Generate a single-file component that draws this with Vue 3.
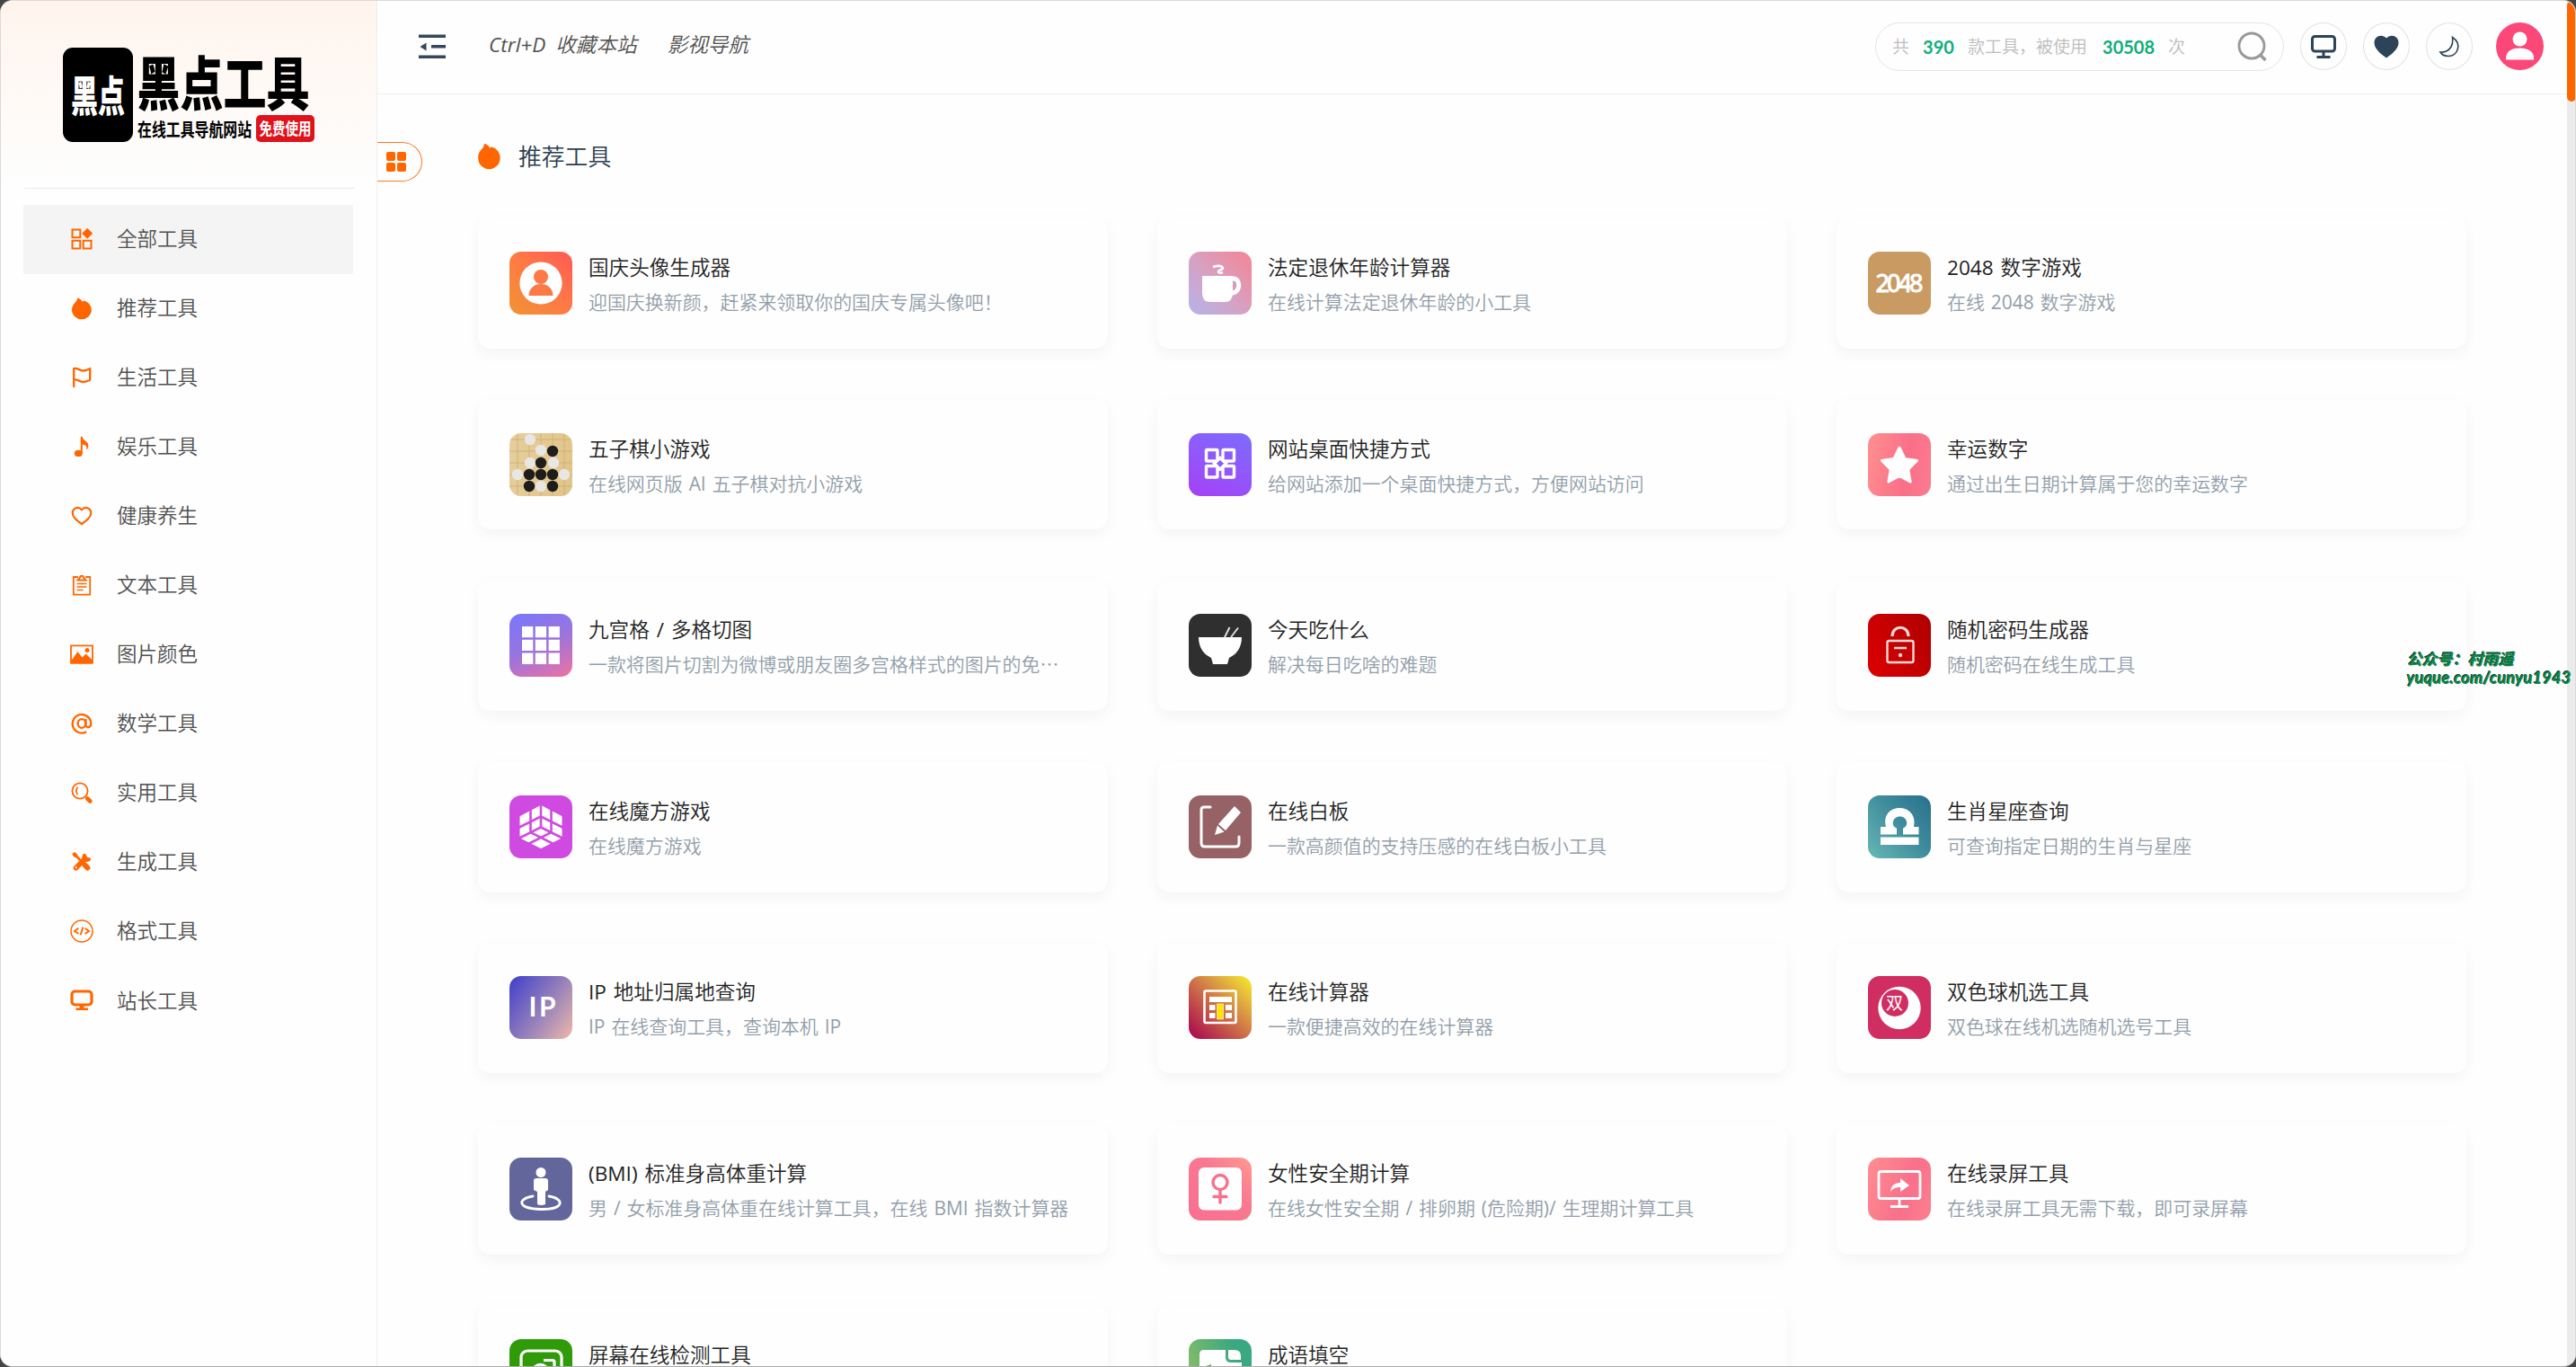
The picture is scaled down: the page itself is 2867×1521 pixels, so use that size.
<script setup>
const flame = '<path fill="currentColor" d="M7.200.6c2.500.6 4.300 2 5.300 3.900.6.1 1.200-.2 1.500-.9 4.700 1.100 8.800 5 8.800 10.200a10.900 10.400 0 0 1-21.800 0C1 9.600 3 7.400 4.700 5.600 6 4.200 6.800 2.800 7.200.6z"/>'

const menu = [
  { name: '全部工具', icon: '<g fill="none" stroke="currentColor" stroke-width="2"><path d="M1.500 1.500h8.800v8.800H1.500zM1.500 13.700h8.800v8.800H1.500zM13.700 13.700h8.800v8.800h-8.800z"/></g><path fill="currentColor" d="M18.200-.3l6 6-6 6-6-6z"/>' },
  { name: '推荐工具', icon: flame },
  { name: '生活工具', icon: '<path fill="none" stroke="currentColor" stroke-width="2.300" d="M3.200 23V2.200c4-1.400 6.300 2.300 10.300 2.300 3 0 4.500-1 7.700-2.300v12.600c-3 1.200-4.700 2.200-7.700 2.200-4 0-6.300-3.700-10.300-2.300"/>' },
  { name: '娱乐工具', icon: '<ellipse cx="8.300" cy="19.400" rx="4.500" ry="3.700" fill="currentColor"/><path fill="currentColor" d="M10.800.8h1.800c.5 4.600 7.400 5.600 6.800 10.600-.2 1.700-1.200 3.300-2.400 4.200 1.400-3.700-.7-5.600-4.200-6v10h-2z"/>' },
  { name: '健康养生', icon: '<path fill="none" stroke="currentColor" stroke-width="2.200" stroke-linejoin="round" d="M12 21C6 16.600 1.800 13.500 1.800 8.900 1.800 3 8.600 1 12 5.400 15.400 1 22.200 3 22.200 8.900 22.200 13.500 18 16.600 12 21z"/>' },
  { name: '文本工具', icon: '<g fill="none" stroke="currentColor" stroke-width="1.800"><path d="M8 3H2.800v19.600h18.400V3H16"/><path d="M7.500 6.500h9L14 3.600C13.800 1 10.200 1 10 3.600z" stroke-width="2"/><path stroke-width="1.400" d="M6.500 10.500h11M6.500 14h11M6.500 17.500h7"/></g>' },
  { name: '图片颜色', icon: '<path fill="none" stroke="currentColor" stroke-width="1.800" d="M0 2.300h24v19.400H0z"/><path fill="currentColor" d="M0 19.500L7.500 9l5 6.500 4-4L24 18.500v4H0z"/><circle cx="18" cy="7.500" r="2.500" fill="currentColor"/>' },
  { name: '数学工具', icon: '<g fill="none" stroke="currentColor" stroke-width="2.300"><path d="M17.200 21.200A10.300 10.300 0 1 1 22.300 12c0 5-5.800 5.400-5.800 1.500V7"/><ellipse cx="12" cy="12" rx="4.400" ry="4.800"/></g>' },
  { name: '实用工具', icon: '<g fill="none" stroke="currentColor"><circle cx="10" cy="10" r="8.600" stroke-width="1.800"/><path stroke-width="1.800" d="M7.500 5.800c-2.200 2-2.200 6 0 8.200"/><path stroke-width="4.600" stroke-linecap="round" d="M18.200 18.500l3.200 3"/></g>' },
  { name: '生成工具', icon: '<g stroke="currentColor" fill="none" stroke-linecap="round"><path stroke-width="2.600" d="M4.500 4L14 14"/><path stroke-width="4.400" d="M3.800 3.500l1.400 1.500"/><path stroke-width="6" d="M15.500 15.500l2.800 3"/><path stroke-width="5.600" d="M5.500 18.700L16 8"/><path stroke-width="4" d="M15 4.800c-2 3.500 1 6.500 5 4.400"/></g><circle cx="5.700" cy="18.300" r="1" fill="#fff"/>' },
  { name: '格式工具', icon: '<g fill="none" stroke="currentColor"><circle cx="12" cy="12" r="12" stroke-width="1.500"/><path stroke-width="1.900" d="M8.400 8.700L4 12l4.400 3M15.600 8.700L20 12l-4.400 3M13.400 7.600l-2.800 8.700"/></g>' },
  { name: '站长工具', icon: '<rect x="1" y="2" width="22" height="15" rx="3.500" fill="none" stroke="currentColor" stroke-width="3.200"/><path fill="currentColor" d="M9.500 18h5v2.500H19V23H5.500v-2.500h4z"/>' }
]

const stones = (list, fill) => list.map(([x, y]) => `<circle cx="${x}" cy="${y}" r="6.200" fill="${fill}"/>`).join('')

const tools = [
  { name: '国庆头像生成器', desc: '迎国庆换新颜，赶紧来领取你的国庆专属头像吧！', bg: 'linear-gradient(45deg,#f09433,#ff7a45 50%,#ff5a55)',
    icon: '<circle cx="35" cy="35" r="23.600" fill="#fff"/><g fill="#fb7a45"><circle cx="35" cy="28" r="8"/><path d="M21.500 49c0-7 5-13 13.500-13s13.500 6 13.500 13z"/></g>' },
  { name: '法定退休年龄计算器', desc: '在线计算法定退休年龄的小工具', bg: 'linear-gradient(45deg,#b4b4ec,#d8a0c0 50%,#f58494)',
    icon: '<path fill="#fff" d="M15 28q0-1 1-1h32q1 0 1 1v18q0 10-9 10H24q-9 0-9-10z"/><path fill="none" stroke="#fff" stroke-width="5" d="M47 30h3c8 0 8 16-2 16"/><path fill="none" stroke="#fff" stroke-width="2.500" d="M27 17c6-2 10-1 11 1s-5 2-5 4 2 2 5 1"/>' },
  { name: '2048 数字游戏', desc: '在线 2048 数字游戏', bg: '#c99a62',
    icon: '<text x="35" y="45" text-anchor="middle" fill="#fff" stroke="#fff" stroke-width="1" font-family="Noto Sans" font-size="27" textLength="53">2048</text>' },
  { name: '五子棋小游戏', desc: '在线网页版 AI 五子棋对抗小游戏', bg: 'linear-gradient(100deg,#e6ce9c,#e2c488)',
    icon: '<path stroke="#c9ac74" stroke-width=".8" d="M0 7h70M0 20h70M0 33h70M0 46h70M0 59h70M9 0v70M22 0v70M35 0v70M48 0v70M61 0v70"/>'
      + stones([[23, 7], [35, 19], [23, 33], [49, 33], [9, 46], [61, 46], [35, 59]], '#e9e7e4')
      + stones([[48, 20], [35, 33], [22, 46], [35, 46], [48, 46], [22, 59], [48, 59]], '#1d1d1b') },
  { name: '网站桌面快捷方式', desc: '给网站添加一个桌面快捷方式，方便网站访问', bg: 'linear-gradient(25deg,#a640f5,#9355fa 45%,#7c6cff)',
    icon: '<g fill="none" stroke="#fff" stroke-width="3.400"><rect x="19.500" y="18.500" width="12.500" height="12.500" rx="1"/><rect x="38" y="18.500" width="12.500" height="12.500" rx="1"/><rect x="19.500" y="36.500" width="12.500" height="12.500" rx="1"/><rect x="38" y="36.500" width="12.500" height="12.500" rx="1"/><path d="M35 27.500l6.500 6.300-6.500 6.300-6.500-6.300z" fill="#8b5cfb"/></g>' },
  { name: '幸运数字', desc: '通过出生日期计算属于您的幸运数字', bg: 'linear-gradient(100deg,#ff9090,#fa6f88 60%,#fb7c90)',
    icon: '<path fill="#fff" stroke="#fff" stroke-width="3" stroke-linejoin="round" d="M35 16l6 12.500 13.500 2-9.700 9.700 2.300 13.800L35 47.500 22.900 54l2.300-13.800-9.700-9.700 13.500-2z"/>' },
  { name: '九宫格 / 多格切图', desc: '一款将图片切割为微博或朋友圈多宫格样式的图片的免⋯', bg: 'linear-gradient(155deg,#7876ff,#9a74dc 50%,#f072a2)',
    icon: '<path fill="#fff" d="M14 14h12.300v12.300H14zM28.800 14h12.300v12.300H28.800zM43.600 14h12.300v12.300H43.600zM14 28.800h12.300v12.300H14zM28.800 28.800h12.300v12.300H28.800zM43.600 28.800h12.300v12.300H43.600zM14 43.600h12.300v12.300H14zM28.800 43.600h12.300v12.300H28.800zM43.600 43.600h12.300v12.300H43.600z"/>' },
  { name: '今天吃什么', desc: '解决每日吃啥的难题', bg: '#2f2f2f',
    icon: '<path fill="#fff" d="M11 26h48c0 12-6 19-14 23l-2 7H27l-2-7c-8-4-14-11-14-23z"/><path stroke="#ddd" stroke-width="2" d="M40 26l5.500-11M47 26l8-10.500"/>' },
  { name: '随机密码生成器', desc: '随机密码在线生成工具', bg: 'linear-gradient(60deg,#de0000,#ae0000)',
    icon: '<g fill="none" stroke="#f6dada" stroke-width="2.400"><rect x="21.500" y="30" width="29" height="24" rx="2"/><path d="M27 25c0-13 18-13 18 0" stroke-width="3.200"/><path d="M29 38h14"/></g><circle cx="36" cy="46" r="2.200" fill="#f6dada"/>' },
  { name: '在线魔方游戏', desc: '在线魔方游戏', bg: '#cf4ae0',
    icon: '<path fill="#fff" stroke="#fff" stroke-linejoin="round" stroke-width="3" d="M35 12.500l22 11.500v22.500L35 57.500 13 46.500V24z"/><g fill="none" stroke="#cf4ae0" stroke-width="2.600"><path d="M35 9v26.500L10 48M35 35.500L60 48"/><path d="M23.500 15v26.200M46.500 15v26.200M10 36l25-12.500L60 36M46.500 41.200L21 54M23.500 41.200L49 54"/></g>' },
  { name: '在线白板', desc: '一款高颜值的支持压感的在线白板小工具', bg: '#976265',
    icon: '<path fill="none" stroke="#fff" stroke-width="3" stroke-linecap="round" d="M24 13h-7q-3 0-3 3v37q0 4 4 4h34q4 0 4-4v-7"/><path fill="#fff" d="M51 12l7 7-17 20-8-7zM32 33.500l7.500 7L29 44z"/>' },
  { name: '生肖星座查询', desc: '可查询指定日期的生肖与星座', bg: 'linear-gradient(50deg,#66b8b6,#3f8c9c 55%,#28708c)',
    icon: '<path fill="#fff" d="M14 46.500h42.500V55H14zM14 35h6c-7-28 37-28 31 0h5.500v8.500H39v-7c7-2 5-13-3.500-13S25 34.500 32 36.500v7H14z"/>' },
  { name: 'IP 地址归属地查询', desc: 'IP 在线查询工具，查询本机 IP', bg: 'linear-gradient(125deg,#4744ca 5%,#a088b8 60%,#f0b8a8)',
    icon: '<text x="36.500" y="45" text-anchor="middle" fill="#fff" font-family="Lato" font-weight="700" font-size="30" textLength="30">IP</text>' },
  { name: '在线计算器', desc: '一款便捷高效的在线计算器', bg: 'linear-gradient(45deg,#a8004f,#d07848 52%,#f6f030)',
    icon: '<rect x="17.500" y="16.500" width="35" height="35.500" rx="1.500" fill="none" stroke="#fff" stroke-width="2.600"/><path fill="#fff" d="M23 23h25v6H23zM23 32h6.500v6H23zM23 41h6.500v6H23zM41 32h7v6h-7zM41 41h7v6h-7z"/><path fill="#ffe600" stroke="#fff" stroke-width=".6" d="M31.500 31h7v17h-7z"/>' },
  { name: '双色球机选工具', desc: '双色球在线机选随机选号工具', bg: '#d02e62',
    icon: '<circle cx="35" cy="35.500" r="23.700" fill="#fff"/><circle cx="30" cy="30" r="15" fill="#d02e62"/><text x="29.500" y="37" text-anchor="middle" fill="#fff" font-family="Noto Sans CJK SC" font-weight="400" font-size="19">双</text>' },
  { name: '(BMI) 标准身高体重计算', desc: '男 / 女标准身高体重在线计算工具，在线 BMI 指数计算器', bg: '#63669b',
    icon: '<circle cx="35" cy="16.500" r="5.500" fill="#fff"/><path fill="#fff" d="M27 26q0-3 3-3h10q3 0 3 3v10l-3 2v14q-5 2-9 0V38l-4-2z"/><path fill="none" stroke="#fff" stroke-width="2.800" stroke-linecap="round" d="M26 43c-18 3-17 14 9 14.500S62 46 44 43"/>' },
  { name: '女性安全期计算', desc: '在线女性安全期 / 排卵期 (危险期)/ 生理期计算工具', bg: 'linear-gradient(45deg,#f96f90,#f97890 60%,#ff9a90)',
    icon: '<rect x="11" y="11" width="48" height="47.500" rx="6" fill="#fff"/><g fill="none" stroke="#f9708c" stroke-width="3.400" stroke-linecap="round"><circle cx="35" cy="27.500" r="8"/><path d="M35 36v14M28 43.500h14"/></g>' },
  { name: '在线录屏工具', desc: '在线录屏工具无需下载，即可录屏幕', bg: 'linear-gradient(110deg,#ff8e92,#f9708a 60%,#fb8090)',
    icon: '<rect x="12" y="15.500" width="46" height="30" rx="2.500" fill="none" stroke="#fff" stroke-width="2.800"/><path stroke="#fff" stroke-width="2.800" d="M35 46v8M25 54.500h20"/><path fill="#fff" d="M25 38c1-8 6-10 11-10v-5l10 8-10 7v-5c-5 0-8 1-11 5z"/>' },
  { name: '屏幕在线检测工具', desc: '屏幕坏点在线检测工具', bg: '#2f9b08',
    icon: '<rect x="13" y="13" width="45" height="38" rx="7" fill="none" stroke="#fff" stroke-width="3.200"/><path fill="none" stroke="#fff" stroke-width="3.200" d="M26 38c0-13 17-13 17 0M38 23.500h10q2 0 2 2V36"/>' },
  { name: '成语填空', desc: '看图填写成语小游戏', bg: 'linear-gradient(70deg,#98c060,#3aa880 75%)',
    icon: '<path fill="#fff" d="M12 17q0-5 5-5h24v8q0 6 6 6h12v30H12z"/><path fill="#fff" d="M44 12h7q7 0 7 7v4H47q-3 0-3-3z"/><path fill="#5cb073" d="M19 30l6-2v4l-5 2z"/>' }
]
</script>

<template>
  <div class="window">
    <aside class="sidebar">
      <div class="brand">
        <svg width="282" height="108" viewBox="0 0 282 108" class="logo">
          <rect x="0" y="0" width="78" height="105" rx="11" fill="#000" />
          <text class="heavy" fill="#fff" font-size="30" transform="translate(9 71) scale(1 1.550)">黑点</text>
          <text class="heavy" fill="#000" font-size="48" transform="translate(82.500 64) scale(1 1.340)">黑点工具</text>
          <text class="heavy small" fill="#000" font-size="15.900" transform="translate(83 99) scale(1 1.290)">在线工具导航网站</text>
          <rect x="215" y="75" width="65" height="30" rx="5" fill="#e0131c" />
          <text class="heavy small" fill="#fff" font-size="14.500" transform="translate(218.500 96.500) scale(1 1.290)">免费使用</text>
        </svg>
      </div>
      <nav class="menu">
        <a v-for="(m, i) in menu" :key="m.name" class="item" :class="{ active: i === 0 }">
          <svg width="24" height="24" viewBox="0 0 24 24" v-html="m.icon"></svg>
          <span>{{ m.name }}</span>
        </a>
      </nav>
    </aside>

    <main class="main">
      <header class="top">
        <svg class="fold" width="30" height="28" viewBox="0 0 30 28">
          <path fill="#34475b" d="M0 .5h30v3.600H0zM14 12h16v3.600H14zM0 23.500h30v3.600H0zM1.500 14L8.500 9.500v9z" />
        </svg>
        <a class="link key">Ctrl+D 收藏本站</a>
        <a class="link">影视导航</a>
        <div class="actions">
          <div class="search">
            <span>共</span><b class="n1">390</b><span>款工具，被使用</span><b class="n2">30508</b><span>次</span>
            <svg width="34" height="34" viewBox="0 0 34 34" fill="none" stroke="#999">
              <circle cx="16" cy="16" r="14" stroke-width="2.900" /><path stroke-width="3.600" d="M25.500 26l6 6" />
            </svg>
          </div>
          <div class="round">
            <svg width="30" height="28" viewBox="0 0 30 28" fill="none" stroke="#2c4358"><rect x="2.500" y="2.500" width="25" height="16.500" rx="3" stroke-width="3" /><path stroke-width="3" d="M15 19v6M7.500 25.500h15" /></svg>
          </div>
          <div class="round">
            <svg width="28" height="26" viewBox="0 0 28 26"><path fill="#2c4358" d="M14 25.500C7 20.500.5 15 .5 8.500.5 1 9-2 14 3.500 19-2 27.500 1 27.500 8.500 27.500 15 21 20.500 14 25.500z" /></svg>
          </div>
          <div class="round">
            <svg width="24" height="24" viewBox="0 0 24 24"><path fill="none" stroke="#2c4358" stroke-width="1.600" d="M15.500 1.500C27 9 21 22.500 11 22.500c-4.500 0-7.500-2-9-4.500 9 .5 15-6 13.500-16.500z" /></svg>
          </div>
          <div class="avatar">
            <svg width="53" height="53" viewBox="0 0 53 53"><path fill="#fff" d="M11 41.500v-2c0-7 6-11 15.500-11S42 32.500 42 39.500v2z" /><circle cx="26.500" cy="18.500" r="8" fill="#fff" /></svg>
          </div>
        </div>
      </header>

      <section class="content">
        <h2 class="heading">
          <svg width="27" height="29" viewBox="0 0 24 24" preserveAspectRatio="none" v-html="flame"></svg>
          <span>推荐工具</span>
        </h2>
        <div class="grid">
          <article v-for="t in tools" :key="t.name" class="card">
            <svg class="tile" viewBox="0 0 70 70" :style="{ background: t.bg }" v-html="t.icon"></svg>
            <div class="info">
              <h3>{{ t.name }}</h3>
              <p>{{ t.desc }}</p>
            </div>
          </article>
        </div>
      </section>
    </main>

    <div class="tab">
      <svg width="22" height="22" viewBox="0 0 22 22" fill="#ff6600"><rect width="10" height="10" rx="2" /><rect x="12" width="10" height="10" rx="2" /><rect y="12" width="10" height="10" rx="2" /><rect x="12" y="12" width="10" height="10" rx="2" /></svg>
    </div>
    <div class="scroll"><div class="thumb"></div></div>
    <div class="mark">
      <div class="m1">公众号：村雨遥</div>
      <div class="m2">yuque.com/cunyu1943</div>
    </div>
  </div>
</template>

<style>
body { background: #454545; overflow: hidden; }
</style>

<style scoped>
.window {
  position: relative;
  box-sizing: border-box;
  width: 2867px;
  height: 1521px;
  display: flex;
  overflow: hidden;
  border: 1px solid #dadada;
  border-bottom-color: #aaa;
  border-radius: 14px;
  background: #fefefe;
  font-family: "Open Sans", "Noto Sans CJK SC DemiLight", "Noto Sans CJK SC", sans-serif;
  font-weight: 400;
}
svg { display: block; flex: none; overflow: visible; }
.sidebar {
  box-sizing: border-box;
  flex: none;
  width: 419px;
  border-right: 1px solid #eee;
  background: linear-gradient(#fff4ec, #fefefe 200px);
}
.brand {
  box-sizing: border-box;
  width: 367px;
  height: 209px;
  margin: 0 0 18px 26px;
  padding: 52px 0 0 43px;
  border-bottom: 1px solid #e8eaee;
}
.heavy { font-family: "Noto Sans CJK SC", sans-serif; font-weight: 900; }
.small { font-weight: 700; }
.menu { margin-left: 25px; width: 367px; }
.item {
  display: flex;
  align-items: center;
  height: 77.050px;
  padding-left: 53px;
  gap: 27px;
  box-sizing: border-box;
  color: #ff6600;
  font-size: 22.500px;
}
.item svg { margin-bottom: 2px; }
.item span { color: #505050; line-height: 30px; padding-bottom: 1px; }
.active { background: #f4f4f4; }
.main { flex: 1; min-width: 0; }
.top {
  display: flex;
  align-items: center;
  box-sizing: border-box;
  height: 104px;
  padding: 0 35px 2px 46px;
  border-bottom: 1px solid #ebeef0;
}
.fold { margin-right: 48px; }
.link { font-size: 22.600px; line-height: 30px; font-style: italic; color: #505050; margin-right: 34px; padding-bottom: 3px; white-space: nowrap; }
.key { word-spacing: 5px; }
.actions { margin-left: auto; display: flex; align-items: center; gap: 18px; }
.search {
  box-sizing: border-box;
  width: 455px;
  height: 54px;
  display: flex;
  align-items: center;
  padding: 0 17px 0 18px;
  border: 1px solid #e4e4e4;
  border-radius: 27px;
  font-size: 19px;
  line-height: 26px;
  color: #bcbcbc;
  white-space: nowrap;
}
.search b { font-family: Lato, sans-serif; color: #10ae7a; font-weight: 700; font-size: 20px; text-align: center; }
.n1 { width: 35px; margin: 0 15px; }
.n2 { width: 57px; margin: 0 16px 0 17px; }
.search svg { margin-left: auto; }
.round {
  box-sizing: border-box;
  width: 52px;
  height: 53px;
  display: flex;
  align-items: center;
  justify-content: center;
  border: 1px solid #e2e2e2;
  border-radius: 50%;
}
.avatar { width: 53px; height: 53px; margin-left: 8px; border-radius: 50%; background: #fb4878; }
.content { padding: 52px 0 0 112px; }
.heading { display: flex; align-items: center; gap: 19px; height: 34px; margin: 0 0 51.300px -1px; font-size: 25.800px; line-height: 34px; font-weight: 400; color: #2c3e50; }
.heading svg { color: #ff6600; margin-bottom: 1px; }
.grid { display: grid; grid-template-columns: repeat(3, 701px); grid-auto-rows: 145.600px; gap: 56px 55px; }
.card {
  display: flex;
  align-items: center;
  box-sizing: border-box;
  padding-left: 35px;
  gap: 18px;
  border-radius: 14px;
  background: #fefefe;
  box-shadow: 0 6px 16px rgba(0, 0, 0, .045);
}
.tile { width: 70px; height: 70px; border-radius: 13px; overflow: hidden; }
.info { white-space: nowrap; padding-top: 4px; }
.info h3 { margin: 0; font-size: 22.600px; line-height: 38px; font-weight: 400; color: #222; word-spacing: 2px; }
.info p { margin: 0; font-size: 20.950px; line-height: 38px; color: #939eaa; word-spacing: 1.500px; }
.tab {
  position: absolute;
  left: 419px;
  top: 157px;
  box-sizing: border-box;
  width: 50px;
  height: 44px;
  padding: 10px;
  border: 1px solid #ff7a22;
  border-left: 0;
  border-radius: 0 22px 22px 0;
}
.mark {
  position: absolute;
  left: 2678px;
  top: 722px;
  font-family: Lato, "Noto Sans CJK SC", sans-serif;
  font-style: italic;
  font-weight: 700;
  line-height: 21px;
  color: #0f8a4c;
  text-shadow: -1px -1px 0 #064026;
  white-space: nowrap;
}
.m1 { font-size: 17px; }
.m2 { font-size: 18px; letter-spacing: .3px; }
.scroll { position: absolute; right: -1px; top: 0; width: 10px; height: 1520px; background: #ebebeb; border-right: 1px solid #999; box-sizing: border-box; }
.thumb { width: 10px; height: 112px; border-radius: 5px; background: #ff6600; }
</style>
